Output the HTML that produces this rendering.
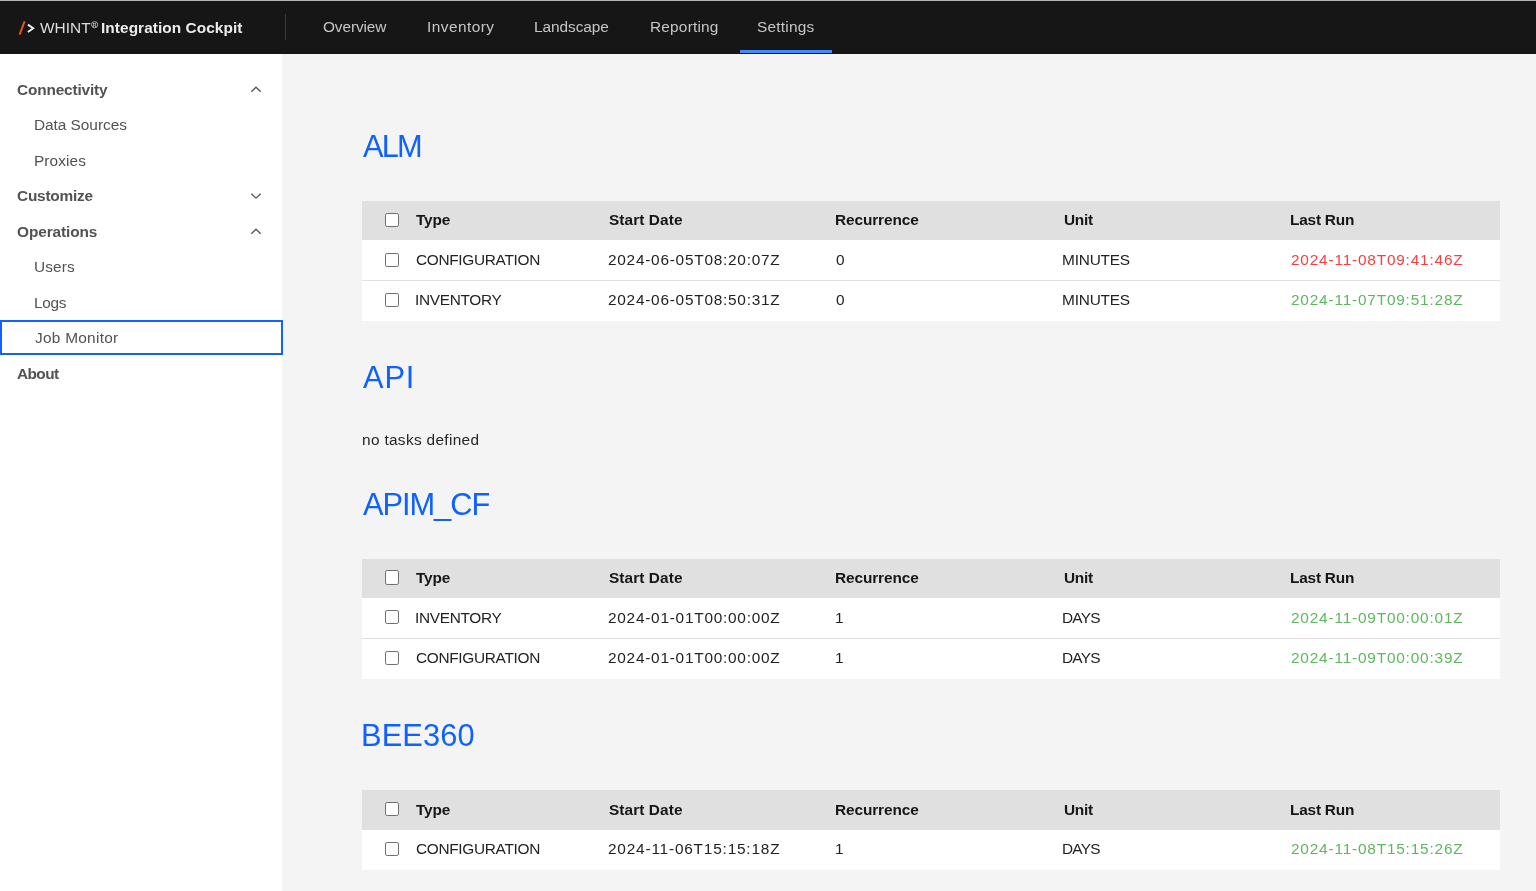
<!DOCTYPE html>
<html><head><meta charset="utf-8">
<style>
*{box-sizing:border-box;margin:0;padding:0}
html,body{width:1536px;height:891px;overflow:hidden;background:#f4f4f4;font-family:"Liberation Sans",sans-serif;position:relative}
.t{position:absolute;white-space:nowrap;will-change:transform}
.cb{position:absolute;left:384.8px;width:14.2px;height:14.2px;border:1.4px solid #6f6f6f;border-radius:2.2px;background:#fff}
</style></head><body>
<div style="position:absolute;left:0;top:0;width:1536px;height:1px;background:#b4b4b4"></div>
<div style="position:absolute;left:0;top:1px;width:1536px;height:52.6px;background:#161616"></div>
<div style="position:absolute;left:0;top:53.6px;width:282px;height:838px;background:#fff"></div>
<div style="position:absolute;left:285px;top:13.7px;width:1px;height:26.8px;background:#393939"></div>
<div style="position:absolute;left:739.6px;top:50px;width:92.4px;height:3.3px;background:#4589ff"></div>
<svg style="position:absolute;left:0;top:0;will-change:transform" width="120" height="54"><path d="M24.6 21.4 L19.6 34.7" stroke="#f0541e" stroke-width="1.9" fill="none"/><path d="M27.9 24.6 L33.2 28.3 L27.9 32" stroke="#f4f4f4" stroke-width="1.9" fill="none"/><circle cx="94.6" cy="24.7" r="3.1" stroke="#bdbdbd" stroke-width="0.9" fill="none"/><text x="94.6" y="26.6" font-size="5" text-anchor="middle" fill="#bdbdbd" font-family="Liberation Sans" font-weight="bold">R</text></svg>
<div style="position:absolute;left:0;top:320.3px;width:282.5px;height:35.2px;border:2.2px solid #0f62fe"></div>
<svg style="position:absolute;left:0;top:0" width="282" height="400"><path d="M251.3 91.75 L256 87.25 L260.7 91.75" stroke="#5a5a5a" stroke-width="1.4" fill="none"/><path d="M251.3 193.65 L256 198.15 L260.7 193.65" stroke="#5a5a5a" stroke-width="1.4" fill="none"/><path d="M251.3 233.75 L256 229.25 L260.7 233.75" stroke="#5a5a5a" stroke-width="1.4" fill="none"/></svg>
<div style="position:absolute;left:362.2px;top:200.9px;width:1138.3px;height:120.30px;background:#fff"></div>
<div style="position:absolute;left:362.2px;top:200.9px;width:1138.3px;height:39.4px;background:#e0e0e0"></div>
<div style="position:absolute;left:362.2px;top:280.25px;width:1138.3px;height:1.1px;background:#e0e0e0"></div>
<div class="cb" style="top:212.75px"></div>
<div class="cb" style="top:252.60px"></div>
<div class="cb" style="top:293.05px"></div>
<div style="position:absolute;left:362.2px;top:558.6px;width:1138.3px;height:120.30px;background:#fff"></div>
<div style="position:absolute;left:362.2px;top:558.6px;width:1138.3px;height:39.4px;background:#e0e0e0"></div>
<div style="position:absolute;left:362.2px;top:637.95px;width:1138.3px;height:1.1px;background:#e0e0e0"></div>
<div class="cb" style="top:570.45px"></div>
<div class="cb" style="top:610.30px"></div>
<div class="cb" style="top:650.75px"></div>
<div style="position:absolute;left:362.2px;top:790.4px;width:1138.3px;height:79.85px;background:#fff"></div>
<div style="position:absolute;left:362.2px;top:790.4px;width:1138.3px;height:39.4px;background:#e0e0e0"></div>
<div class="cb" style="top:802.25px"></div>
<div class="cb" style="top:842.10px"></div>
<div class="t" id="whint" style="left:39.76px;top:17.78px;font-size:15.4px;line-height:20px;color:#dedede;letter-spacing:0.055px;">WHINT</div>
<div class="t" id="ic" style="left:101.40px;top:18.18px;font-size:15.4px;line-height:20px;color:#ececec;font-weight:bold;letter-spacing:0.067px;">Integration Cockpit</div>
<div class="t" id="n1" style="left:323.42px;top:17.38px;font-size:15.4px;line-height:20px;color:#c6c6c6;letter-spacing:-0.103px;">Overview</div>
<div class="t" id="n2" style="left:427.08px;top:17.38px;font-size:15.4px;line-height:20px;color:#c6c6c6;letter-spacing:0.465px;">Inventory</div>
<div class="t" id="n3" style="left:534.34px;top:17.38px;font-size:15.4px;line-height:20px;color:#c6c6c6;letter-spacing:-0.055px;">Landscape</div>
<div class="t" id="n4" style="left:649.76px;top:17.38px;font-size:15.4px;line-height:20px;color:#c6c6c6;letter-spacing:0.210px;">Reporting</div>
<div class="t" id="n5" style="left:756.62px;top:17.38px;font-size:15.4px;line-height:20px;color:#c6c6c6;letter-spacing:0.234px;">Settings</div>
<div class="t" id="s0" style="left:17.38px;top:79.93px;font-size:15.4px;line-height:20px;color:#525252;font-weight:bold;letter-spacing:-0.156px;">Connectivity</div>
<div class="t" id="s1" style="left:34.36px;top:115.43px;font-size:15.4px;line-height:20px;color:#525252;letter-spacing:-0.035px;">Data Sources</div>
<div class="t" id="s2" style="left:34.36px;top:150.93px;font-size:15.4px;line-height:20px;color:#525252;letter-spacing:0.090px;">Proxies</div>
<div class="t" id="s3" style="left:17.38px;top:186.43px;font-size:15.4px;line-height:20px;color:#525252;font-weight:bold;letter-spacing:-0.232px;">Customize</div>
<div class="t" id="s4" style="left:17.38px;top:221.93px;font-size:15.4px;line-height:20px;color:#525252;font-weight:bold;letter-spacing:-0.096px;">Operations</div>
<div class="t" id="s5" style="left:34.08px;top:257.43px;font-size:15.4px;line-height:20px;color:#525252;letter-spacing:0.110px;">Users</div>
<div class="t" id="s6" style="left:34.08px;top:292.93px;font-size:15.4px;line-height:20px;color:#525252;letter-spacing:-0.307px;">Logs</div>
<div class="t" id="s7" style="left:34.68px;top:328.43px;font-size:15.4px;line-height:20px;color:#525252;letter-spacing:0.274px;">Job Monitor</div>
<div class="t" id="s8" style="left:17.30px;top:363.93px;font-size:15.4px;line-height:20px;color:#525252;font-weight:bold;letter-spacing:-0.575px;">About</div>
<div class="t" id="hALM" style="left:362.54px;top:127.25px;font-size:30.8px;line-height:40px;color:#0f62fe;letter-spacing:-1.850px;">ALM</div>
<div class="t" id="hAPI" style="left:363.46px;top:358.05px;font-size:30.8px;line-height:40px;color:#0f62fe;letter-spacing:0.860px;">API</div>
<div class="t" id="hAPIM" style="left:363.46px;top:485.35px;font-size:30.8px;line-height:40px;color:#0f62fe;letter-spacing:-1.047px;">APIM_CF</div>
<div class="t" id="hBEE" style="left:361.00px;top:716.05px;font-size:30.8px;line-height:40px;color:#0f62fe;letter-spacing:0.104px;">BEE360</div>
<div class="t" id="note" style="left:362.46px;top:430.28px;font-size:15.4px;line-height:20px;color:#262626;letter-spacing:0.328px;">no tasks defined</div>
<div class="t" id="Ah0" style="left:416.36px;top:210.03px;font-size:15.4px;line-height:20px;color:#161616;font-weight:bold;letter-spacing:-0.180px;">Type</div>
<div class="t" id="Ah1" style="left:608.70px;top:210.03px;font-size:15.4px;line-height:20px;color:#161616;font-weight:bold;letter-spacing:0.089px;">Start Date</div>
<div class="t" id="Ah2" style="left:835.08px;top:210.03px;font-size:15.4px;line-height:20px;color:#161616;font-weight:bold;letter-spacing:-0.100px;">Recurrence</div>
<div class="t" id="Ah3" style="left:1063.70px;top:210.03px;font-size:15.4px;line-height:20px;color:#161616;font-weight:bold;letter-spacing:-0.260px;">Unit</div>
<div class="t" id="Ah4" style="left:1290.32px;top:210.03px;font-size:15.4px;line-height:20px;color:#161616;font-weight:bold;letter-spacing:-0.211px;">Last Run</div>
<div class="t" id="Ar0c0" style="left:416.46px;top:249.88px;font-size:15.4px;line-height:20px;color:#222222;letter-spacing:-0.310px;">CONFIGURATION</div>
<div class="t" id="Ar0c1" style="left:608.30px;top:249.88px;font-size:15.4px;line-height:20px;color:#222222;letter-spacing:0.752px;">2024-06-05T08:20:07Z</div>
<div class="t" id="Ar0c2" style="left:835.68px;top:249.88px;font-size:15.4px;line-height:20px;color:#222222;">0</div>
<div class="t" id="Ar0c3" style="left:1062.30px;top:249.88px;font-size:15.4px;line-height:20px;color:#222222;letter-spacing:-0.190px;">MINUTES</div>
<div class="t" id="Ar0c4" style="left:1291.32px;top:249.88px;font-size:15.4px;line-height:20px;color:#ff3b3b;letter-spacing:0.809px;">2024-11-08T09:41:46Z</div>
<div class="t" id="Ar1c0" style="left:415.36px;top:290.33px;font-size:15.4px;line-height:20px;color:#222222;letter-spacing:-0.320px;">INVENTORY</div>
<div class="t" id="Ar1c1" style="left:608.30px;top:290.33px;font-size:15.4px;line-height:20px;color:#222222;letter-spacing:0.752px;">2024-06-05T08:50:31Z</div>
<div class="t" id="Ar1c2" style="left:835.68px;top:290.33px;font-size:15.4px;line-height:20px;color:#222222;">0</div>
<div class="t" id="Ar1c3" style="left:1062.30px;top:290.33px;font-size:15.4px;line-height:20px;color:#222222;letter-spacing:-0.190px;">MINUTES</div>
<div class="t" id="Ar1c4" style="left:1291.32px;top:290.33px;font-size:15.4px;line-height:20px;color:#5cb85c;letter-spacing:0.809px;">2024-11-07T09:51:28Z</div>
<div class="t" id="Bh0" style="left:416.36px;top:567.73px;font-size:15.4px;line-height:20px;color:#161616;font-weight:bold;letter-spacing:-0.180px;">Type</div>
<div class="t" id="Bh1" style="left:608.70px;top:567.73px;font-size:15.4px;line-height:20px;color:#161616;font-weight:bold;letter-spacing:0.089px;">Start Date</div>
<div class="t" id="Bh2" style="left:835.08px;top:567.73px;font-size:15.4px;line-height:20px;color:#161616;font-weight:bold;letter-spacing:-0.100px;">Recurrence</div>
<div class="t" id="Bh3" style="left:1063.70px;top:567.73px;font-size:15.4px;line-height:20px;color:#161616;font-weight:bold;letter-spacing:-0.260px;">Unit</div>
<div class="t" id="Bh4" style="left:1290.32px;top:567.73px;font-size:15.4px;line-height:20px;color:#161616;font-weight:bold;letter-spacing:-0.211px;">Last Run</div>
<div class="t" id="Br0c0" style="left:415.36px;top:607.58px;font-size:15.4px;line-height:20px;color:#222222;letter-spacing:-0.320px;">INVENTORY</div>
<div class="t" id="Br0c1" style="left:608.30px;top:607.58px;font-size:15.4px;line-height:20px;color:#222222;letter-spacing:0.752px;">2024-01-01T00:00:00Z</div>
<div class="t" id="Br0c2" style="left:835.08px;top:607.58px;font-size:15.4px;line-height:20px;color:#222222;">1</div>
<div class="t" id="Br0c3" style="left:1062.30px;top:607.58px;font-size:15.4px;line-height:20px;color:#222222;letter-spacing:-0.750px;">DAYS</div>
<div class="t" id="Br0c4" style="left:1291.32px;top:607.58px;font-size:15.4px;line-height:20px;color:#5cb85c;letter-spacing:0.809px;">2024-11-09T00:00:01Z</div>
<div class="t" id="Br1c0" style="left:416.46px;top:648.03px;font-size:15.4px;line-height:20px;color:#222222;letter-spacing:-0.310px;">CONFIGURATION</div>
<div class="t" id="Br1c1" style="left:608.30px;top:648.03px;font-size:15.4px;line-height:20px;color:#222222;letter-spacing:0.752px;">2024-01-01T00:00:00Z</div>
<div class="t" id="Br1c2" style="left:835.08px;top:648.03px;font-size:15.4px;line-height:20px;color:#222222;">1</div>
<div class="t" id="Br1c3" style="left:1062.30px;top:648.03px;font-size:15.4px;line-height:20px;color:#222222;letter-spacing:-0.750px;">DAYS</div>
<div class="t" id="Br1c4" style="left:1291.32px;top:648.03px;font-size:15.4px;line-height:20px;color:#5cb85c;letter-spacing:0.809px;">2024-11-09T00:00:39Z</div>
<div class="t" id="Ch0" style="left:416.36px;top:799.53px;font-size:15.4px;line-height:20px;color:#161616;font-weight:bold;letter-spacing:-0.180px;">Type</div>
<div class="t" id="Ch1" style="left:608.70px;top:799.53px;font-size:15.4px;line-height:20px;color:#161616;font-weight:bold;letter-spacing:0.089px;">Start Date</div>
<div class="t" id="Ch2" style="left:835.08px;top:799.53px;font-size:15.4px;line-height:20px;color:#161616;font-weight:bold;letter-spacing:-0.100px;">Recurrence</div>
<div class="t" id="Ch3" style="left:1063.70px;top:799.53px;font-size:15.4px;line-height:20px;color:#161616;font-weight:bold;letter-spacing:-0.260px;">Unit</div>
<div class="t" id="Ch4" style="left:1290.32px;top:799.53px;font-size:15.4px;line-height:20px;color:#161616;font-weight:bold;letter-spacing:-0.211px;">Last Run</div>
<div class="t" id="Cr0c0" style="left:416.46px;top:839.38px;font-size:15.4px;line-height:20px;color:#222222;letter-spacing:-0.310px;">CONFIGURATION</div>
<div class="t" id="Cr0c1" style="left:608.30px;top:839.38px;font-size:15.4px;line-height:20px;color:#222222;letter-spacing:0.804px;">2024-11-06T15:15:18Z</div>
<div class="t" id="Cr0c2" style="left:835.08px;top:839.38px;font-size:15.4px;line-height:20px;color:#222222;">1</div>
<div class="t" id="Cr0c3" style="left:1062.30px;top:839.38px;font-size:15.4px;line-height:20px;color:#222222;letter-spacing:-0.750px;">DAYS</div>
<div class="t" id="Cr0c4" style="left:1291.32px;top:839.38px;font-size:15.4px;line-height:20px;color:#5cb85c;letter-spacing:0.809px;">2024-11-08T15:15:26Z</div>
</body></html>
